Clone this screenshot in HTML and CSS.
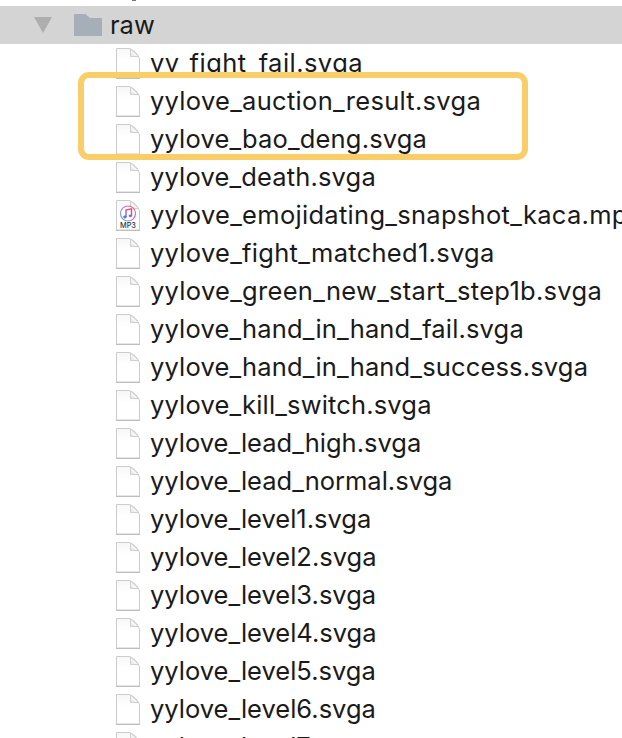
FILE: index.html
```html
<!DOCTYPE html>
<html lang="en">
<head>
<meta charset="utf-8">
<title>raw</title>
<link rel="stylesheet" href="styles.css">
</head>
<body>
<svg width="0" height="0" class="defs">
  <defs>
    <linearGradient id="paper" x1="0" y1="0" x2="0" y2="1"><stop offset="0" stop-color="#f7f7f7"/><stop offset=".4" stop-color="#fff"/></linearGradient>
    <linearGradient id="fold" x1="0" y1="1" x2="1" y2="0"><stop offset="0" stop-color="#ddd"/><stop offset=".5" stop-color="#fff"/></linearGradient>
    <linearGradient id="ring" x1="0" y1="1" x2="1" y2="0"><stop offset="0" stop-color="#4bb9f5"/><stop offset=".45" stop-color="#b07be0"/><stop offset="1" stop-color="#fa5a78"/></linearGradient>
    <linearGradient id="note" x1="0" y1="0" x2="0" y2="1"><stop offset="0" stop-color="#f5426c"/><stop offset="1" stop-color="#4a7df0"/></linearGradient>
    <symbol id="file" viewBox="0 0 26 34">
      <path d="M1.500 2.500h12.500c5 1.500 8.500 5 10.500 10.500v19h-23z" fill="url(#paper)" stroke="#cccccc"/>
      <path d="M1 32.500h24" stroke="#bdbdbd" stroke-width="1"/>
      <path d="M15.500 3v7.500h8z" fill="url(#fold)" stroke="#cfcfcf"/>
    </symbol>
    <symbol id="music" viewBox="0 0 26 34">
      <circle cx="13" cy="15.500" r="7.500" fill="#fff" stroke="url(#ring)" stroke-width="1.200"/>
      <path d="M11 19v-7l5.500-1.200v7" fill="none" stroke="url(#note)" stroke-width="1.400"/>
      <ellipse cx="9.900" cy="19" rx="1.800" ry="1.400" fill="#5b75ea"/>
      <ellipse cx="15.400" cy="17.800" rx="1.800" ry="1.400" fill="#9665d8"/>
    </symbol>
  </defs>
</svg>
<main class="tree">
  <div class="above"></div>
  <div class="folder">
    <svg class="arrow" viewBox="0 0 18 16"><path d="M0 0h18L9 16z" fill="#aeaeae"/></svg>
    <svg class="dir" viewBox="0 0 28 22"><path d="M0 0h11.500l4.500 4h12v18H0z" fill="#a6afb8"/></svg>
    <span>raw</span>
  </div>
  <ul class="files">
    <li class="widest"><svg class="icon"><use href="#file"/></svg><span>yy_fight_fail.svga</span></li>
    <li class="wider"><svg class="icon"><use href="#file"/></svg><span>yylove_auction_result.svga</span></li>
    <li class="wide"><svg class="icon"><use href="#file"/></svg><span>yylove_bao_deng.svga</span></li>
    <li class="wide"><svg class="icon"><use href="#file"/></svg><span>yylove_death.svga</span></li>
    <li class="wider"><svg class="icon"><use href="#file"/><use href="#music"/><text x="13" y="30" class="kind">MP3</text></svg><span>yylove_emojidating_snapshot_kaca.mp3</span></li>
    <li class="wider"><svg class="icon"><use href="#file"/></svg><span>yylove_fight_matched1.svga</span></li>
    <li class="wider"><svg class="icon"><use href="#file"/></svg><span>yylove_green_new_start_step1b.svga</span></li>
    <li class="wide"><svg class="icon"><use href="#file"/></svg><span>yylove_hand_in_hand_fail.svga</span></li>
    <li class="wide"><svg class="icon"><use href="#file"/></svg><span>yylove_hand_in_hand_success.svga</span></li>
    <li class="wide"><svg class="icon"><use href="#file"/></svg><span>yylove_kill_switch.svga</span></li>
    <li><svg class="icon"><use href="#file"/></svg><span>yylove_lead_high.svga</span></li>
    <li><svg class="icon"><use href="#file"/></svg><span>yylove_lead_normal.svga</span></li>
    <li><svg class="icon"><use href="#file"/></svg><span>yylove_level1.svga</span></li>
    <li><svg class="icon"><use href="#file"/></svg><span>yylove_level2.svga</span></li>
    <li><svg class="icon"><use href="#file"/></svg><span>yylove_level3.svga</span></li>
    <li><svg class="icon"><use href="#file"/></svg><span>yylove_level4.svga</span></li>
    <li><svg class="icon"><use href="#file"/></svg><span>yylove_level5.svga</span></li>
    <li><svg class="icon"><use href="#file"/></svg><span>yylove_level6.svga</span></li>
    <li><svg class="icon"><use href="#file"/></svg><span>yylove_level7.svga</span></li>
  </ul>
  <div class="highlight"></div>
</main>
</body>
</html>
```
FILE: styles.css
```css
* { box-sizing: border-box; }
body { margin: 0; background: #fff; color: #1a1a1a; font: 25.5px/38px Inter, "Liberation Sans", sans-serif; }
.defs { position: absolute; }
.tree { position: relative; height: 738px; overflow: hidden; }
/* Bottom edge of the row scrolled out above the folder */
.above { height: 6px; padding-left: 132px; }
.above::before { content: ""; display: block; width: 4px; height: 1px; background: #77777c; }
.folder { display: flex; align-items: center; height: 38px; padding-left: 34px; background: #d4d4d4; }
.arrow { width: 18px; height: 16px; margin-right: 22px; }
.dir { width: 28px; height: 22px; margin-right: 8px; }
.files { margin: 0; padding: 0; list-style: none; }
.files li { display: flex; align-items: center; height: 38px; padding-left: 115px; white-space: nowrap; }
.wide { letter-spacing: .16px; }
.wider { letter-spacing: .29px; }
.widest { letter-spacing: .45px; }
.icon { flex: none; width: 26px; height: 34px; margin-right: 9px; }
.kind { font-size: 7.3px; font-weight: 500; letter-spacing: 0; text-anchor: middle; fill: #333; }
.highlight { position: absolute; left: 78px; top: 72px; width: 450px; height: 88px; border: 6px solid #f9ce68; border-radius: 11px; }
```
